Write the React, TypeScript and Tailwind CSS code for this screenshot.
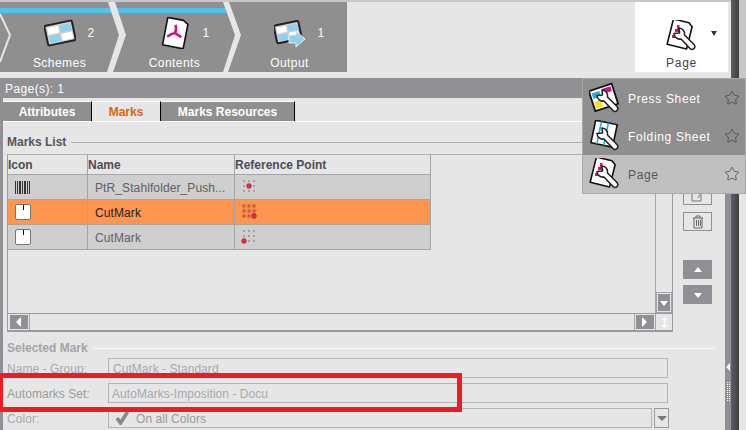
import { Star } from "lucide-react"

const font = "font-['Liberation_Sans',Arial,sans-serif]"

function SchemeIcon() {
  return (
    <svg width="32" height="32" viewBox="0 0 32 32">
      <g transform="rotate(-12 16 16)">
        <rect x="2" y="6" width="28" height="20" rx="1.5" fill="#cfcfcf" stroke="#222" strokeWidth="2" />
        <rect x="4.5" y="8.5" width="11" height="7" fill="#fff" />
        <rect x="17" y="8.5" width="11" height="7" fill="#8fd0ee" />
        <rect x="4.5" y="17" width="11" height="7" fill="#8fd0ee" />
        <rect x="17" y="17" width="11" height="7" fill="#fff" />
      </g>
    </svg>
  )
}

function PdfIcon() {
  return (
    <svg width="32" height="32" viewBox="0 0 32 32">
      <g transform="rotate(11 16 16)">
        <path d="M6 2 H22 L27 5 V30 H6 Z" fill="#fff" stroke="#111" strokeWidth="1.6" strokeLinejoin="round" />
        <path d="M16 16 C17 13 16 10 15 8 M16 16 C13 17 11 19 9 21 M16 16 C18 17 21 18 23 19" fill="none" stroke="#cf1382" strokeWidth="2.6" />
      </g>
    </svg>
  )
}

function OutputIcon() {
  return (
    <svg width="32" height="32" viewBox="0 0 32 32">
      <g transform="rotate(-12 14 14)">
        <rect x="1" y="6" width="25" height="18" rx="1.5" fill="#cfcfcf" stroke="#222" strokeWidth="2" />
        <rect x="3.5" y="8.5" width="9.5" height="6" fill="#fff" />
        <rect x="14.5" y="8.5" width="9.5" height="6" fill="#8fd0ee" />
        <rect x="3.5" y="16" width="9.5" height="6" fill="#8fd0ee" />
        <rect x="14.5" y="16" width="9.5" height="6" fill="#fff" />
      </g>
      <path d="M15 18 H22 V14 L31 22 L22 30 V26 H15 Z" fill="#8fd0ee" stroke="#eee" strokeWidth="1" />
    </svg>
  )
}

function Wrench() {
  return (
    <path
      d="M13 8 L13.5 13 L8 13.5 A5.8 5.8 0 0 0 15 19 L24 28.5 A2.6 2.6 0 0 0 28 24.5 L18.5 15 A5.8 5.8 0 0 0 13 8 Z"
      fill="#fff"
      stroke="#222"
      strokeWidth="1.6"
      strokeLinejoin="round"
    />
  )
}

function PageToolIcon({ size }: { size: number }) {
  return (
    <svg width={size} height={size} viewBox="0 0 32 32">
      <g transform="rotate(14 14 14)">
        <path d="M6 1 H20 L24 4 V27 H4 V1 Z" fill="#fff" stroke="#111" strokeWidth="1.6" strokeLinejoin="round" />
      </g>
      <rect x="11" y="5" width="2.5" height="4" fill="#cf1382" />
      <rect x="6" y="15" width="4" height="3" fill="#cf1382" />
      <rect x="9" y="9" width="4" height="3" fill="#cf1382" />
      <Wrench />
    </svg>
  )
}

function PressIcon() {
  return (
    <svg width="32" height="32" viewBox="0 0 32 32">
      <g transform="rotate(-18 14 14)">
        <rect x="2" y="5" width="24" height="21" fill="#fff" stroke="#111" strokeWidth="1.8" />
        <rect x="4" y="8" width="8" height="6" fill="#20ace6" />
        <rect x="15" y="7" width="9" height="5" fill="#cf1382" />
        <rect x="4" y="17" width="7" height="7" fill="#f7e018" />
      </g>
      <Wrench />
    </svg>
  )
}

function FoldingIcon() {
  return (
    <svg width="32" height="32" viewBox="0 0 32 32">
      <g transform="rotate(12 14 14)">
        <rect x="4" y="2" width="22" height="23" fill="#fff" stroke="#111" strokeWidth="1.6" />
        <path d="M10 2 V25 M17 2 V25" stroke="#20ace6" strokeWidth="1.6" />
      </g>
      <Wrench />
    </svg>
  )
}

function Barcode() {
  return (
    <svg width="15" height="13" viewBox="0 0 15 13">
      <path d="M.5 0V13M2.5 0V13M4.5 0V13M5.5 0V13M7.5 0V13M9.5 0V13M10.5 0V13M12.5 0V13M14.5 0V13" stroke="#333" strokeWidth="1" />
    </svg>
  )
}

function CutIcon() {
  return (
    <div className="relative w-4 h-4 bg-white border border-[#777] rounded-[2px]">
      <div className="absolute left-[7px] top-0 w-px h-[5px] bg-black" />
    </div>
  )
}

function RefPoint({ rx, ry, all }: { rx: number; ry: number; all?: boolean }) {
  const spots = [3, 8, 13]
  return (
    <svg width="18" height="18" viewBox="0 0 18 18">
      {spots.map((y) =>
        spots.map((x) => (
          <g key={`${x}-${y}`}>
            {all && <circle cx={x} cy={y} r="2.4" fill="#e8794a" />}
            <rect x={x - 0.5} y={y - 0.5} width="1" height="1" fill="#222" />
          </g>
        ))
      )}
      <circle cx={rx} cy={ry} r="2.4" fill="#f0263c" stroke="#8a2030" strokeWidth="0.5" />
    </svg>
  )
}

function Step({ icon, count, label }: { icon: React.ReactNode; count: string; label: string }) {
  return (
    <div className="w-[115px] flex flex-col items-center pt-[15px]">
      <div className="grid grid-cols-[1fr_32px_1fr] w-full h-8 items-center">
        <span />
        {icon}
        <span className="pl-[12px] text-[12px] text-white">{count}</span>
      </div>
      <span className="mt-[6px] text-[12px] leading-4 tracking-[0.45px] text-white">{label}</span>
    </div>
  )
}

function MenuRow({ icon, label, active }: { icon: React.ReactNode; label: string; active?: boolean }) {
  return (
    <div className={`h-[38px] flex items-center pl-[6px] pr-[5px] ${active ? "bg-[#c0c0c0] text-[#55555c]" : "text-white"}`}>
      {icon}
      <span className="ml-[7px] pt-px flex-1 text-[12px] tracking-[0.65px]">{label}</span>
      <Star size={16} strokeWidth={1} className="text-[#333]" />
    </div>
  )
}

function Legend({ label, muted }: { label: string; muted?: boolean }) {
  return (
    <div className="flex items-center h-[14px] pl-1 pr-[10px]">
      <span className={`text-[12px] font-bold ${muted ? "text-[#a4a4a8]" : "text-[#55555c]"}`}>{label}</span>
      <div className={`flex-1 h-px ml-[5px] ${muted ? "bg-[#f8f8f8]" : "bg-[#adadb0]"}`} />
    </div>
  )
}

function ArrowButton({ dir, small }: { dir: "up" | "down" | "left" | "right"; small?: boolean }) {
  const pts = {
    up: "1,7 9,7 5,2",
    down: "1,3 9,3 5,8",
    left: "7,0 7,10 2,5",
    right: "2,0 2,10 7,5",
  }[dir]
  return (
    <div className={`flex items-center justify-center bg-[#8f8f95] ${small ? "w-full h-full" : "w-[29px] h-[19px]"}`}>
      <svg width="10" height="10" viewBox="0 0 10 10">
        <polygon points={pts} fill="#fff" />
      </svg>
    </div>
  )
}

const rows = [
  { icon: <Barcode />, name: "PtR_Stahlfolder_Push...", ref: <RefPoint rx={8} ry={8} />, bg: "bg-[#cfcfcf] text-[#606066]" },
  { icon: <CutIcon />, name: "CutMark", ref: <RefPoint rx={13} ry={13} all />, bg: "bg-[#ff964f] text-[#222]" },
  { icon: <CutIcon />, name: "CutMark", ref: <RefPoint rx={3} ry={13} />, bg: "bg-[#cfcfcf] text-[#606066]" },
]

export default function App() {
  return (
    <div className={`${font} relative w-[746px] h-[430px] overflow-hidden flex bg-[#e6e6e6]`}>
      <div className="w-[731px] flex flex-col">
        <div className="h-[2px] shrink-0 bg-[#c8c8c8]" />

        {/* toolbar */}
        <div className="h-[70px] shrink-0 flex justify-between pr-[3px]">
          <div className="relative w-[347px] h-full bg-[#8f8f8f] flex pl-[2px]">
            <div className="absolute left-0 top-[6px] w-[226px] h-[5px] bg-[#4fc3ec]" />
            <svg className="absolute left-0 top-0" width="347" height="70" viewBox="0 0 347 70">
              <polyline points="0,12 10,33 0,60" fill="none" stroke="#e6e6e6" strokeWidth="2" />
              <polygon points="108,0 115,0 126,33 113,70 107,70 119,33" fill="#e6e6e6" />
              <polygon points="223,0 229,0 241,33 228,70 223,70 235,33" fill="#e6e6e6" />
            </svg>
            <div className="relative flex">
              <Step icon={<SchemeIcon />} count="2" label="Schemes" />
              <Step icon={<PdfIcon />} count="1" label="Contents" />
              <Step icon={<OutputIcon />} count="1" label="Output" />
            </div>
          </div>

          <div className="w-[93px] h-full bg-white flex flex-col items-center pt-[18px]">
            <div className="grid grid-cols-[1fr_32px_1fr] w-full h-8 items-center">
              <span />
              <PageToolIcon size={32} />
              <svg className="ml-[12px] mb-[6px]" width="8" height="7" viewBox="0 0 8 7">
                <polygon points="1,1 7,1 4,6" fill="#333" />
              </svg>
            </div>
            <span className="mt-[3px] text-[12px] leading-4 tracking-[0.7px] text-[#444]">Page</span>
          </div>
        </div>

        <div className="mt-[6px] h-[20px] shrink-0 bg-[#909095] pl-[5px] pt-px flex items-center text-[12px] tracking-[0.4px] text-white">
          Page(s): 1
        </div>

        <div className="flex-1 flex min-h-0">
          <div className="w-[3px] bg-[#8f8f95]" />

          <div className="flex-1 min-w-0">
            {/* tabs */}
            <div className="mt-[3px] h-[21px] flex border-b border-white">
              <div className="w-[89px] border-t border-white border-r border-r-black bg-[#8f8f8f] text-white text-[12px] font-bold flex items-center justify-center">
                Attributes
              </div>
              <div className="w-[69px] border-t border-white border-r border-r-black text-[#e0640f] text-[12px] font-bold flex items-center justify-center">
                Marks
              </div>
              <div className="w-[134px] border-t border-white border-r border-r-black bg-[#8f8f8f] text-white text-[12px] font-bold flex items-center justify-center">
                Marks Resources
              </div>
            </div>

            <div className="mt-[13px]">
              <Legend label="Marks List" />
            </div>

            <div className="mt-[5px] flex pl-1">
              {/* list pane */}
              <div className="w-[666px] h-[178px] border-x border-[#9a9a9f] border-b-2 border-t border-t-[#b0b0b0] flex flex-col">
                <div className="flex-1 flex min-h-0">
                  <div className="flex-1 text-[12px]">
                    <div className="w-[423px] h-[20px] flex border-b border-[#a5a5a5] border-r font-bold text-[#4d4d55]">
                      <div className="w-[80px] border-r border-[#a5a5a5] pt-px flex items-center">Icon</div>
                      <div className="w-[147px] border-r border-[#a5a5a5] pt-px flex items-center">Name</div>
                      <div className="flex-1 pt-px flex items-center">Reference Point</div>
                    </div>
                    {rows.map((r, i) => (
                      <div key={i} className={`w-[423px] h-[25px] flex border-b border-r border-[#a5a5a5] ${r.bg}`}>
                        <div className="w-[80px] border-r border-[#a5a5a5] pl-[7px] flex items-center">{r.icon}</div>
                        <div className="w-[147px] border-r border-[#a5a5a5] pl-[7px] pt-px tracking-[0.1px] flex items-center whitespace-nowrap">{r.name}</div>
                        <div className="flex-1 pl-[6px] flex items-center">{r.ref}</div>
                      </div>
                    ))}
                  </div>
                  <div className="w-[17px] border-l border-[#a5a5a5] flex flex-col justify-end">
                    <div className="h-[21px] border border-[#a5a5a5] p-px">
                      <ArrowButton dir="down" small />
                    </div>
                  </div>
                </div>
                <div className="h-[17px] border-t border-[#9a9a9f] flex">
                  <div className="w-[21px] ml-[1px] p-px border-r border-[#a5a5a5]">
                    <ArrowButton dir="left" small />
                  </div>
                  <div className="flex-1" />
                  <div className="w-[21px] p-px border-l border-[#a5a5a5]">
                    <ArrowButton dir="right" small />
                  </div>
                  <div className="w-[17px] border-l border-[#a5a5a5] flex items-center justify-center">
                    <svg width="7" height="11" viewBox="0 0 7 11">
                      <path d="M3.5 0L6.5 3H4.2V8H6.5L3.5 11L.5 8H2.8V3H.5Z" fill="#fff" />
                    </svg>
                  </div>
                </div>
              </div>

              {/* side buttons */}
              <div className="ml-[10px] pt-[32px] flex flex-col">
                <div className="w-[29px] h-[19px] border border-[#8f8f95] flex items-center justify-center">
                  <svg width="13" height="14" viewBox="0 0 13 14">
                    <path d="M1 1V12H10V1" fill="none" stroke="#777" />
                    <path d="M7 9L11 2" stroke="#999" strokeWidth="1.5" />
                  </svg>
                </div>
                <div className="mt-[7px] w-[29px] h-[19px] border border-[#8f8f95] flex items-center justify-center">
                  <svg width="12" height="14" viewBox="0 0 12 14">
                    <path d="M1 3H11M4 3V1H8V3M2 3V13H10V3M4.5 5V11M6.5 5V11M8.5 5V11" fill="none" stroke="#66666c" />
                  </svg>
                </div>
                <div className="mt-[29px]">
                  <ArrowButton dir="up" />
                </div>
                <div className="mt-[6px]">
                  <ArrowButton dir="down" />
                </div>
              </div>
            </div>

            <div className="mt-[9px]">
              <Legend label="Selected Mark" muted />
            </div>

            {/* selected mark fields */}
            <div className="mt-[3px] pl-1 flex flex-col gap-[5px] text-[12px] tracking-[0.05px] text-[#a9a9ad]">
              <div className="flex items-center">
                <span className="w-[101px] pt-px">Name - Group:</span>
                <div className="w-[560px] h-[20px] border border-[#b4b4b4] pl-1 pt-px flex items-center">CutMark - Standard</div>
              </div>
              <div className="flex items-center">
                <span className="w-[101px] pt-px text-[#9a9a9f]">Automarks Set:</span>
                <div className="w-[560px] h-[20px] border border-[#b4b4b4] pl-[3px] pt-px flex items-center">AutoMarks-Imposition - Docu</div>
              </div>
              <div className="flex items-center">
                <span className="w-[101px] pt-px">Color:</span>
                <div className="w-[544px] h-[20px] border border-[#b4b4b4] pl-[6px] flex items-center">
                  <svg width="14" height="14" viewBox="0 0 14 14">
                    <path d="M2 7L5.5 12L12.5 1" fill="none" stroke="#8a8a8a" strokeWidth="3.6" />
                  </svg>
                  <span className="ml-[7px] pt-px text-[#9a9a9f]">On all Colors</span>
                </div>
                <div className="ml-[2px] w-[15px] h-[20px] border border-[#9a9a9f] flex items-center justify-center">
                  <svg width="10" height="7" viewBox="0 0 10 7">
                    <polygon points="0,1 10,1 5,6" fill="#77777d" />
                  </svg>
                </div>
              </div>
            </div>
          </div>

          {/* splitter */}
          <div className="w-[6px] bg-[#8f8f95] flex flex-col items-center pt-[265px]">
            <svg width="5" height="8" viewBox="0 0 5 8">
              <polygon points="4,0 4,8 0,4" fill="#fff" />
            </svg>
            <div className="mt-[11px] w-[3px] h-[19px] border-x border-dotted border-white" />
          </div>
        </div>
      </div>

      <div className="w-[8px] bg-gradient-to-r from-[#5e5e64] to-[#3e3e44]" />
      <div className="w-[7px] flex flex-col">
        <div className="h-[78px] bg-[#c8c8c8]" />
        <div className="flex-1 bg-[#e6e6e6]" />
      </div>

      {/* view dropdown */}
      <div className="absolute left-[582px] top-[78px] w-[164px] h-[116px] bg-[#8f8f8f] border border-[#a8a8a8]">
        <MenuRow icon={<PressIcon />} label="Press Sheet" />
        <MenuRow icon={<FoldingIcon />} label="Folding Sheet" />
        <MenuRow icon={<PageToolIcon size={32} />} label="Page" active />
      </div>

      {/* annotation */}
      <div className="absolute left-[-2px] top-[373px] w-[464px] h-[39px] border-[5px] border-[#ed1c24]" />
    </div>
  )
}
